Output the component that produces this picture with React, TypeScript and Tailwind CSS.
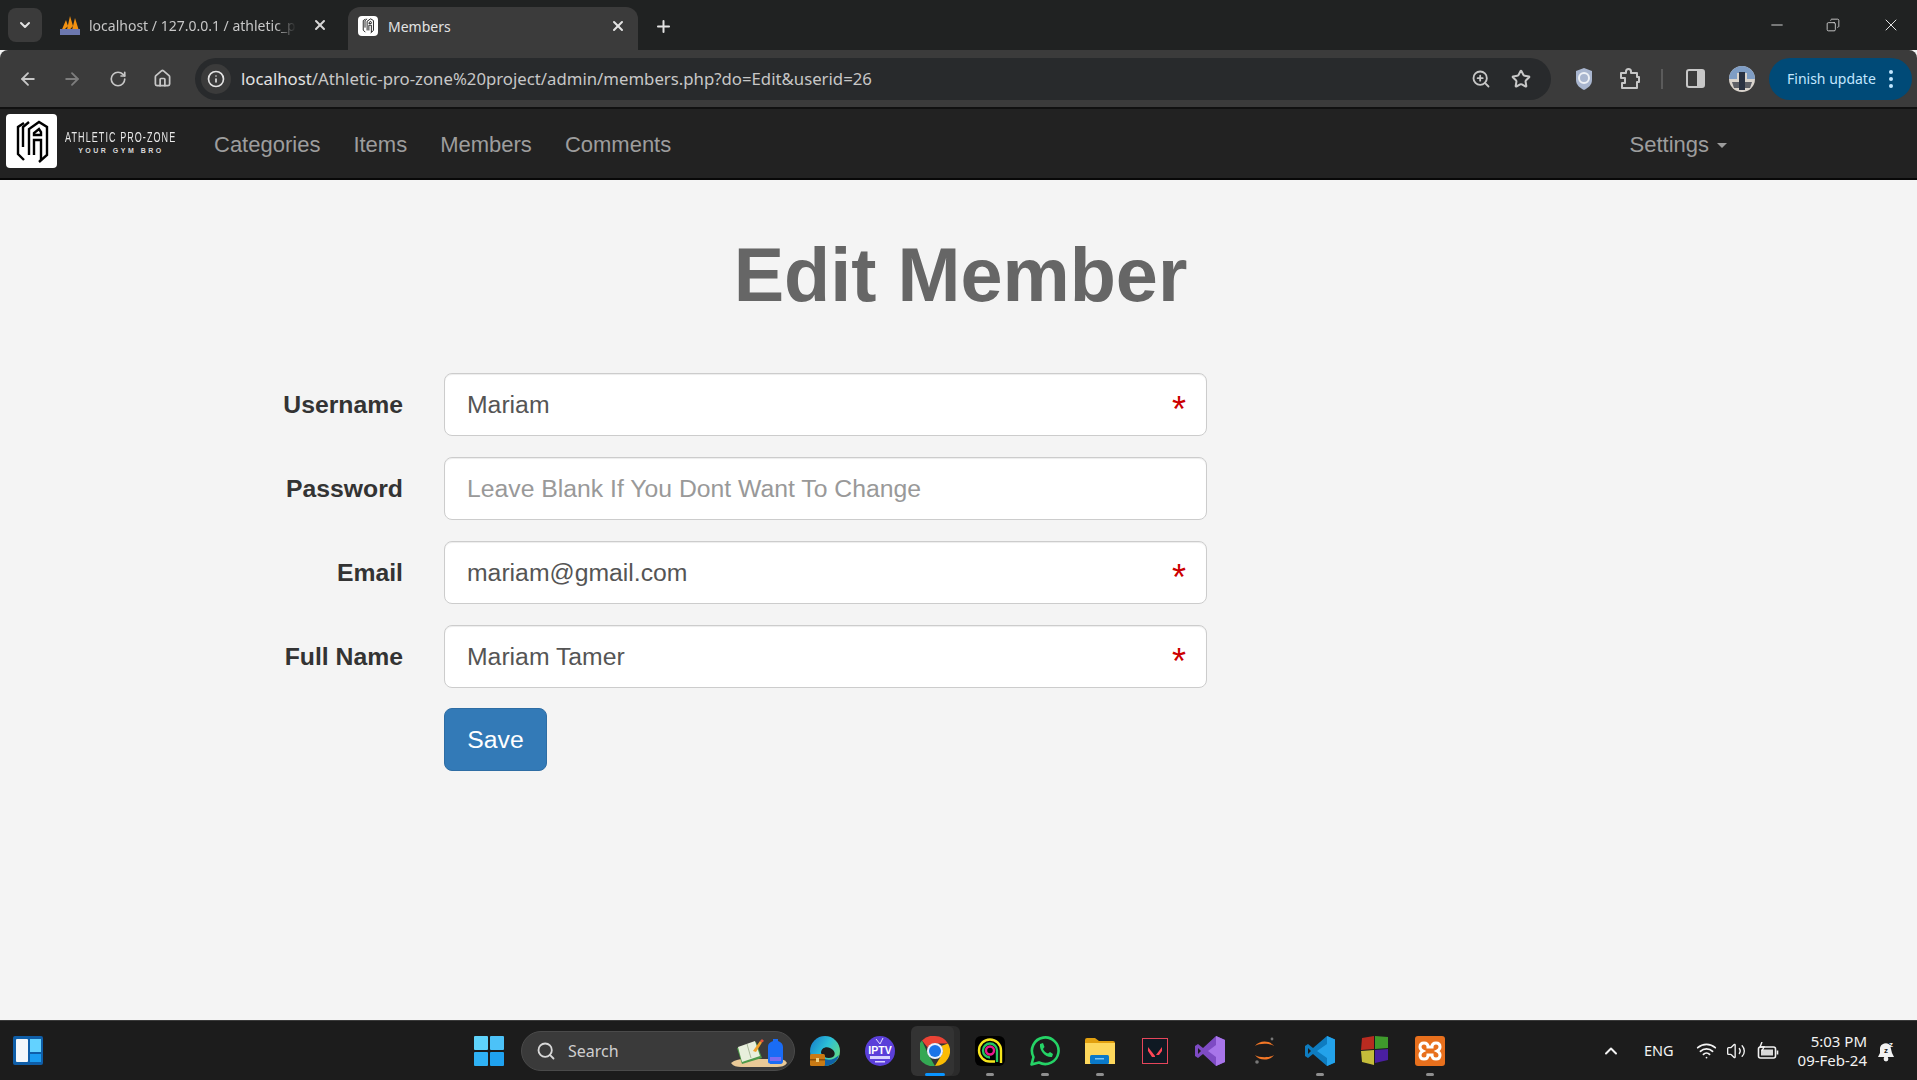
import { ArrowLeft, ArrowRight, ChevronDown, ChevronUp, Copy, Home, Info, Minus, Plus, RotateCw, Search, Star, Volume2, Wifi, X, ZoomIn } from "lucide-react";

const sans = "font-['Liberation_Sans',Arial,sans-serif]";

function LogoMark({ size }: { size: number }) {
  return (
    <svg width={size} height={(size * 54) / 51} viewBox="0 0 51 54" fill="none" stroke="#000" strokeWidth="2.4">
      <path d="M18 9 L12 13 V40 L18 46" />
      <path d="M23 8 L17 13 V33" />
      <path d="M23 41 V15 L33 8 L41 13 V41 L33 48" />
      <path d="M28 41 V26 H35 V46" />
      <path d="M28 21 V19 L33 15 L35 18 V21 Z" />
    </svg>
  );
}

function Tabs() {
  return (
    <div className="flex h-[50px] items-end bg-[#202222] pl-2">
      <div className="mb-2 flex h-[34px] w-[34px] items-center justify-center rounded-lg bg-[#3b3b3b]">
        <ChevronDown className="h-4 w-4 text-[#e3e3e3]" strokeWidth={3} />
      </div>
      <div className="mb-[9px] ml-[17px] flex h-[32px] w-[289px] items-center">
        <svg className="shrink-0" width="22" height="22" viewBox="0 0 22 22">
          <path d="M1 20 L7 6 L9 12 Z M7 20 L11 2 L14 12 Z M12 20 L16 4 L21 20 Z" fill="#f29111" />
          <rect x="1" y="15" width="20" height="6" fill="#6c78af" />
        </svg>
        <span className="ml-[8px] w-[207px] shrink-0 overflow-hidden whitespace-nowrap font-['Noto_Sans',sans-serif] text-[14px] text-[#c7c7c7] [mask-image:linear-gradient(to_right,black_90%,transparent)]">
          localhost / 127.0.0.1 / athletic_phpmyadmin
        </span>
        <X className="ml-[16px] h-4 w-4 shrink-0 text-[#d5d5d5]" strokeWidth={3} />
      </div>
      <div className="flex h-[43px] w-[290px] items-center rounded-t-xl bg-[#3b3b3b] pb-[5px] pl-[10px]">
        <div className="flex h-[20px] w-[20px] items-center justify-center rounded-sm bg-white">
          <LogoMark size={18} />
        </div>
        <span className="ml-[10px] font-['Noto_Sans',sans-serif] text-[14px] text-[#e3e3e3]">Members</span>
        <X className="ml-auto mr-[12px] h-4 w-4 text-[#e3e3e3]" strokeWidth={3} />
      </div>
      <Plus className="mb-[14px] ml-[16px] h-[19px] w-[19px] text-[#e3e3e3]" strokeWidth={2.5} />
      <div className="mb-[15px] ml-auto flex items-center text-[#e3e3e3]">
        <Minus className="h-[18px] w-[18px]" strokeWidth={1.2} />
        <Copy className="ml-[40px] h-[14px] w-[14px] -scale-x-100" strokeWidth={1.4} />
        <X className="ml-[41px] mr-[16px] h-[20px] w-[20px]" strokeWidth={1.2} />
      </div>
    </div>
  );
}

function Toolbar() {
  return (
    <div className="flex h-[59px] items-center rounded-t-lg border-b-2 border-[#111] bg-[#3b3b3b]">
      <ArrowLeft className="ml-[18px] h-[20px] w-[20px] text-[#c7c7c7]" strokeWidth={2.2} />
      <ArrowRight className="ml-[24px] h-[20px] w-[20px] text-[#7d7d7d]" strokeWidth={2.2} />
      <RotateCw className="ml-[27px] h-[18px] w-[18px] text-[#c7c7c7]" strokeWidth={2.2} />
      <Home className="ml-[26px] h-[19px] w-[19px] text-[#c7c7c7]" strokeWidth={2.2} />
      <div className="ml-[23px] flex h-[42px] w-[1356px] items-center rounded-full bg-[#282a2c] pl-[6px]">
        <div className="flex h-[30px] w-[30px] items-center justify-center rounded-full bg-[#3b3b3b]">
          <Info className="h-[18px] w-[18px] text-[#e3e3e3]" strokeWidth={2.2} />
        </div>
        <span className="ml-[10px] font-['Noto_Sans',sans-serif] text-[16.75px] text-[#e3e3e3]">
          localhost<span className="text-[#c7c7c7]">/Athletic-pro-zone%20project/admin/members.php?do=Edit&userid=26</span>
        </span>
        <ZoomIn className="ml-auto h-[20px] w-[20px] text-[#c7c7c7]" strokeWidth={2.2} />
        <Star className="ml-[20px] mr-[20px] h-[20px] w-[20px] text-[#c7c7c7]" strokeWidth={2.4} />
      </div>
      <svg className="ml-[23px]" width="20" height="24" viewBox="0 0 20 24">
        <path d="M10 1 L18 4 V13 C18 18 14 21 10 23 C6 21 2 18 2 13 V4 Z" fill="#a9b6cf" />
        <circle cx="10" cy="11" r="5" fill="none" stroke="#eef1f6" strokeWidth="2" />
      </svg>
      <svg className="ml-[25px]" width="22" height="22" viewBox="0 0 22 22" fill="none" stroke="#c7c7c7" strokeWidth="2" strokeLinejoin="round">
        <path d="M2 5 H7 V3.5 A2.5 2.5 0 0 1 12 3.5 V5 H18 V9 H20 V14 H18 V20 H3 V15 H6 V10 H2 Z" />
      </svg>
      <div className="ml-[20px] h-[20px] w-[2px] bg-[#5b5b5b]" />
      <svg className="ml-[22px]" width="21" height="21" viewBox="0 0 21 21">
        <rect x="2" y="2" width="17" height="17" rx="2" fill="none" stroke="#c7c7c7" strokeWidth="2" />
        <rect x="12" y="2" width="7" height="17" fill="#c7c7c7" />
      </svg>
      <svg className="ml-[23px]" width="26" height="26" viewBox="0 0 26 26">
        <circle cx="13" cy="13" r="13" fill="#d9d3cc" />
        <path d="M0 13 A13 13 0 0 1 26 13 H18 V7 H8 V13 Z" fill="#7f9dc4" />
        <rect x="10" y="6" width="6" height="18" fill="#2a3242" />
        <path d="M3 16 H10 V22 H5 Z M16 16 H23 L21 22 H16 Z" fill="#5d5f66" />
      </svg>
      <div className="ml-[14px] flex h-[42px] w-[143px] items-center rounded-full bg-[#004a77] pl-[18px]">
        <span className="font-['Noto_Sans',sans-serif] text-[14px] text-[#c2e7ff]">Finish update</span>
        <div className="ml-[13px] flex flex-col gap-[3px]">
          <div className="h-[4px] w-[4px] rounded-full bg-[#c2e7ff]" />
          <div className="h-[4px] w-[4px] rounded-full bg-[#c2e7ff]" />
          <div className="h-[4px] w-[4px] rounded-full bg-[#c2e7ff]" />
        </div>
      </div>
    </div>
  );
}

function Navbar() {
  const links = ["Categories", "Items", "Members", "Comments"];
  return (
    <nav className={`flex h-[71px] items-center border-b-2 border-[#080808] bg-[#222] ${sans}`}>
      <div className="mb-[5px] ml-[6px] flex h-[54px] w-[51px] items-center justify-center rounded-[4px] bg-white">
        <LogoMark size={51} />
      </div>
      <div className="mb-[3px] ml-[10px] flex w-[108px] flex-col items-center">
        <span className="origin-center scale-x-[0.6] whitespace-nowrap text-[15px] leading-[14px] tracking-[1.8px] text-[#e8e8e8]">
          ATHLETIC PRO-ZONE
        </span>
        <span className="mt-[3px] whitespace-nowrap text-[7px] font-bold leading-[8px] tracking-[2.5px] text-[#d8d8d8]">
          YOUR GYM BRO
        </span>
      </div>
      <div className="ml-[39px] mt-[2px] flex gap-[33px] text-[22px] text-[#9d9d9d]">
        {links.map((link) => (
          <a key={link}>{link}</a>
        ))}
      </div>
      <div className="ml-auto mr-[190px] mt-[2px] flex items-center text-[22px] text-[#9d9d9d]">
        Settings
        <span className="ml-[8px] mt-[2px] h-0 w-0 border-x-[5px] border-t-[5px] border-x-transparent border-t-[#9d9d9d]" />
      </div>
    </nav>
  );
}

function Field({ label, value, placeholder, required }: { label: string; value?: string; placeholder?: string; required?: boolean }) {
  return (
    <div className="flex items-center">
      <label className="w-[403px] text-right text-[24.75px] font-bold text-[#333]">{label}</label>
      <div className="relative ml-[41px] w-[763px]">
        <input
          readOnly
          value={value}
          placeholder={placeholder}
          className="h-[63px] w-full rounded-lg border border-[#ccc] bg-white px-[22px] text-[24.75px] text-[#555] shadow-[inset_0_1px_1px_rgba(0,0,0,0.075)] outline-none placeholder:text-[#999]"
        />
        {required && <span className="absolute right-[21px] top-[13px] text-[36px] leading-[48px] text-[#c00]">*</span>}
      </div>
    </div>
  );
}

function EditMember() {
  return (
    <main className={`h-[840px] bg-[#f4f4f4] pt-[53px] ${sans}`}>
      <h1 className="pl-[4px] text-center text-[75.6px] font-bold leading-[84px] text-[#666]">Edit Member</h1>
      <form className="mt-[56px] flex flex-col gap-[21px]">
        <Field label="Username" value="Mariam" required />
        <Field label="Password" placeholder="Leave Blank If You Dont Want To Change" />
        <Field label="Email" value="mariam@gmail.com" required />
        <Field label="Full Name" value="Mariam Tamer" required />
        <div className="-mt-px ml-[444px]">
          <button type="button" className="h-[63px] w-[103px] rounded-lg border border-[#2e6da4] bg-[#337ab7] text-[24.75px] text-white">
            Save
          </button>
        </div>
      </form>
    </main>
  );
}

function TaskIcon({ children, running, active }: { children: React.ReactNode; running?: boolean; active?: boolean }) {
  return (
    <div className="relative flex h-[60px] w-[55px] items-center justify-center">
      {active && (
        <>
          <div className="absolute left-[40px] top-[5px] h-[50px] w-[13px] rounded-r-md bg-[#2b2b2b]" />
          <div className="absolute left-[4px] top-[5px] h-[50px] w-[43px] rounded-md bg-[#333]" />
        </>
      )}
      <div className="relative">{children}</div>
      {running && (
        <div className={`absolute bottom-[5px] h-[3px] rounded-full ${active ? "left-[18px] w-[20px] bg-[#0a95ff]" : "w-[8px] bg-[#8f8f8f]"}`} />
      )}
    </div>
  );
}

function Taskbar() {
  return (
    <footer className="flex h-[60px] items-center border-t border-[#3a3a3a] bg-[#1c1c1c] font-['Noto_Sans',sans-serif]">
      <svg className="ml-[13px]" width="30" height="29" viewBox="0 0 30 29">
        <rect width="30" height="29" rx="2" fill="#0f5ea8" />
        <rect x="3" y="3" width="12" height="23" rx="1" fill="#f4f8fb" />
        <rect x="17" y="3" width="11" height="13" fill="#63d2ff" />
        <rect x="17" y="18" width="11" height="8" fill="#1a9cf0" />
      </svg>
      <svg className="ml-[431px]" width="30" height="30" viewBox="0 0 30 30">
        <rect width="14" height="14" rx="1" fill="#5fd3fb" />
        <rect x="16" width="14" height="14" rx="1" fill="#4cc2f8" />
        <rect y="16" width="14" height="14" rx="1" fill="#2fb2f5" />
        <rect x="16" y="16" width="14" height="14" rx="1" fill="#1fa2f0" />
      </svg>
      <div className="ml-[17px] flex h-[40px] w-[274px] items-center rounded-full border border-[#4a4a4a] bg-[#3a3a3a] pl-[14px]">
        <Search className="h-[20px] w-[20px] text-[#d8d8d8]" strokeWidth={2.2} />
        <span className="ml-[12px] text-[16px] leading-[18px] text-[#cfcfcf]">Search</span>
        <svg className="ml-auto mr-[5px]" width="60" height="38" viewBox="0 0 60 38">
          <path d="M2 31 C6 28 10 27 14 27 H50 C54 27 57 29 58 31 C56 34 52 35 48 35 H12 C8 35 4 34 2 31 Z" fill="#e9c997" />
          <path d="M8 16 L27 10 L33 26 L13 32 Z" fill="#4f9a4a" />
          <path d="M9 15 L26 9 L31 24 L13 30 Z" fill="#e8efdc" />
          <path d="M18 12 L22 26" stroke="#a9b89a" strokeWidth="1" />
          <path d="M24 19 L31 9 L33 10.5 L27 20 Z" fill="#f0a22a" />
          <path d="M31 9 L33 7 L35 9 L33 10.5 Z" fill="#e4533a" />
          <path d="M39 29 V15 C39 11 42 10 44 9 V7 H49 V9 C52 10 54 12 54 15 V29 C54 32 52 32 50 32 H43 C41 32 39 32 39 29 Z" fill="#1a6cf5" />
          <path d="M41 25 H52 V29 H41 Z" fill="#7b6cf0" />
        </svg>
      </div>
      <div className="ml-[2px] flex">
        <TaskIcon>
          <svg width="30" height="30" viewBox="0 0 30 30">
            <defs>
              <linearGradient id="edgeTop" x1="0" y1="0" x2="1" y2="0.6">
                <stop offset="0" stopColor="#1478c8" />
                <stop offset="0.55" stopColor="#2cc0d8" />
                <stop offset="1" stopColor="#5fd98a" />
              </linearGradient>
            </defs>
            <circle cx="15" cy="15" r="15" fill="url(#edgeTop)" />
            <path d="M11 17 C11 12 16 10 20 12 C25 14 26 19 23 21 C19 23 13 22 11 17 Z" fill="#1c1c1c" />
            <path d="M13 22 C18 25 24 24 29 19 C27 26 21 30 15 30 C13 30 12 28 13 22 Z" fill="#0f62a8" />
            <rect y="18" width="15" height="12" rx="1.5" fill="#c97a14" />
            <rect y="23" width="15" height="1.5" fill="#8a4f08" />
            <rect x="6" y="22" width="3" height="4" fill="#f0d080" />
          </svg>
        </TaskIcon>
        <TaskIcon>
          <svg width="30" height="30" viewBox="0 0 30 30">
            <circle cx="15" cy="15" r="15" fill="#5b3fd9" />
            <path d="M11 3 L15 8 L18 2" fill="none" stroke="#e4e0ff" strokeWidth="1" />
            <text x="15" y="18" textAnchor="middle" fontSize="10.5" fontWeight="bold" fill="#fff" fontFamily="Liberation Sans">IPTV</text>
            <rect x="5" y="20" width="20" height="3" fill="#d8d2ff" />
            <rect x="10" y="25" width="10" height="1.5" fill="#d8d2ff" />
          </svg>
        </TaskIcon>
        <TaskIcon running active>
          <svg width="30" height="30" viewBox="0 0 30 30">
            <path d="M15 0 A15 15 0 0 1 28 7.5 H15 A7.5 7.5 0 0 0 8 12 L2 4.5 A15 15 0 0 1 15 0 Z" fill="#ea4335" />
            <path d="M2 4.5 L8.5 19 L15 30 A15 15 0 0 1 2 4.5 Z" fill="#34a853" />
            <path d="M28 7.5 A15 15 0 0 1 15 30 L21.5 19 A7.5 7.5 0 0 0 21 10 Z" fill="#fbbc04" />
            <circle cx="15" cy="15" r="8" fill="#e8f0fe" />
            <circle cx="15" cy="15" r="6" fill="#1a73e8" />
          </svg>
        </TaskIcon>
        <TaskIcon running>
          <svg width="30" height="30" viewBox="0 0 30 30">
            <rect width="30" height="30" rx="6" fill="#000" />
            <path d="M26 27 V14.5 A11 11 0 1 0 15 25.5 H20" fill="none" stroke="#f5e51b" strokeWidth="2.4" />
            <path d="M22 26 V14.5 A7 7 0 1 0 15 21.5" fill="none" stroke="#22c55e" strokeWidth="2.4" />
            <circle cx="15" cy="14.5" r="4" fill="none" stroke="#e6188e" strokeWidth="2.4" />
          </svg>
        </TaskIcon>
        <TaskIcon running>
          <svg width="30" height="30" viewBox="0 0 30 30" fill="none">
            <path d="M1.5 28.5 L3.5 21 A13.3 13.3 0 1 1 9 26.5 Z" stroke="#25d366" strokeWidth="2.6" strokeLinejoin="round" />
            <path d="M10 8 L13 7 L14.5 11 L13 13 C14 15 15.5 16.5 18 17.5 L20 16 L23 18 L22 21 C16 22 9 15 10 8 Z" fill="#25d366" />
          </svg>
        </TaskIcon>
        <TaskIcon running>
          <svg width="30" height="26" viewBox="0 0 30 26">
            <path d="M0 2 Q0 0 2 0 H10 L14 3 H28 Q30 3 30 5 V8 H0 Z" fill="#e2a00f" />
            <path d="M0 5 H30 V26 H0 Z" fill="#fdd75c" />
            <rect x="5" y="17" width="19" height="9" rx="1.5" fill="#0a79c9" />
            <rect x="10" y="20" width="9" height="1.5" fill="#7cc6f5" />
          </svg>
        </TaskIcon>
        <TaskIcon>
          <svg width="26" height="26" viewBox="0 0 26 26">
            <rect x="0.5" y="0.5" width="25" height="25" fill="#0f1923" stroke="#e6465a" />
            <path d="M6 9 L13 18 V19 H10 L6 13 Z" fill="#ff4655" />
            <path d="M20 9 V13 L17 17 H14 Z" fill="#ff4655" />
          </svg>
        </TaskIcon>
        <TaskIcon>
          <svg width="30" height="30" viewBox="0 0 30 30">
            <path d="M21 0 L30 4 V26 L21 30 L8 18 L3 22 L0 20 V10 L3 8 L8 12 Z" fill="#7e4bc4" />
            <path d="M21 0 L30 4 V26 L21 30 V9 L13 15 L21 21 Z" fill="#a875ea" />
            <path d="M3 12 L6 15 L3 18 Z" fill="#1c1c1c" />
          </svg>
        </TaskIcon>
        <TaskIcon>
          <svg width="21" height="27" viewBox="0 0 21 27">
            <path d="M1 9 C5 3 16 3 20 9 C16 6 5 6 1 9 Z M1 18 C5 24 16 24 20 18 C16 21 5 21 1 18 Z" fill="#f37726" />
            <circle cx="18" cy="2" r="1.4" fill="#777" />
            <circle cx="3" cy="25" r="1.8" fill="#777" />
          </svg>
        </TaskIcon>
        <TaskIcon running>
          <svg width="30" height="30" viewBox="0 0 30 30">
            <path d="M22 0 L30 3.5 V26.5 L22 30 L8 18 L3 22 L0 20 V10 L3 8 L8 12 Z" fill="#0e7cc0" />
            <path d="M22 0 L30 3.5 V26.5 L22 30 V8 L12 15 L22 22 Z" fill="#23a2ea" />
            <path d="M3 12 L6 15 L3 18 Z" fill="#1c1c1c" />
          </svg>
        </TaskIcon>
        <TaskIcon>
          <svg width="27" height="29" viewBox="0 0 27 29">
            <path d="M1 2 L13 0 V13 L0 14 Z" fill="#b92b20" />
            <path d="M14 0 L27 1 V12 L14 13 Z" fill="#3f9a2c" />
            <path d="M0 15 L13 14 V29 L1 26 Z" fill="#c5bd3a" />
            <path d="M14 14 L27 13 V24 L14 27 Z" fill="#4a1fa0" />
          </svg>
        </TaskIcon>
        <TaskIcon running>
          <svg width="30" height="30" viewBox="0 0 30 30">
            <rect width="30" height="30" rx="3" fill="#e8701d" />
            <path d="M13 11 C13 8 11 7 9 7 C6 7 5 9 5 11 C5 13 6 14 8 15 C6 16 5 17 5 19 C5 21 6 23 9 23 C11 23 13 22 13 19 H17 C17 22 19 23 21 23 C24 23 25 21 25 19 C25 17 24 16 22 15 C24 14 25 13 25 11 C25 9 24 7 21 7 C19 7 17 8 17 11 Z" fill="none" stroke="#fff" strokeWidth="3" />
          </svg>
        </TaskIcon>
      </div>
      <div className="ml-auto flex items-center text-[#f2f2f2]">
        <ChevronUp className="h-[20px] w-[20px]" strokeWidth={2.4} />
        <span className="ml-[23px] text-[14.5px]">ENG</span>
        <Wifi className="ml-[22px] h-[21px] w-[21px]" strokeWidth={2} />
        <Volume2 className="ml-[9px] h-[20px] w-[20px]" strokeWidth={1.6} />
        <svg className="ml-[11px]" width="22" height="18" viewBox="0 0 22 18" fill="none" stroke="#f2f2f2" strokeWidth="1.6">
          <rect x="1.5" y="5" width="17" height="11" rx="2" />
          <rect x="4" y="7.5" width="12" height="6" fill="#d8d8d8" stroke="none" />
          <path d="M20.5 8.5 V12.5" />
          <path d="M5 0 L3 5 H7 L5 9" stroke="#f2f2f2" strokeWidth="1.4" />
        </svg>
        <div className="ml-[19px] flex flex-col items-end text-[15px] leading-[19px]">
          <span>5:03 PM</span>
          <span>09-Feb-24</span>
        </div>
        <svg className="ml-[9px] mr-[21px]" width="20" height="22" viewBox="0 0 20 22">
          <path d="M2 17 L4 13 V8 A6 6 0 0 1 14 5 L16 13 L18 17 Z" fill="#f2f2f2" />
          <circle cx="10" cy="19" r="2.4" fill="#f2f2f2" />
          <text x="8" y="13" fontSize="8" fontWeight="bold" fill="#1c1c1c" fontFamily="Liberation Sans">z</text>
          <text x="13" y="7" fontSize="8" fontWeight="bold" fill="#f2f2f2" fontFamily="Liberation Sans">z</text>
        </svg>
      </div>
    </footer>
  );
}

export default function App() {
  return (
    <div className="h-[1080px] w-[1917px] overflow-hidden bg-[#f4f4f4]">
      <Tabs />
      <Toolbar />
      <Navbar />
      <EditMember />
      <Taskbar />
    </div>
  );
}
